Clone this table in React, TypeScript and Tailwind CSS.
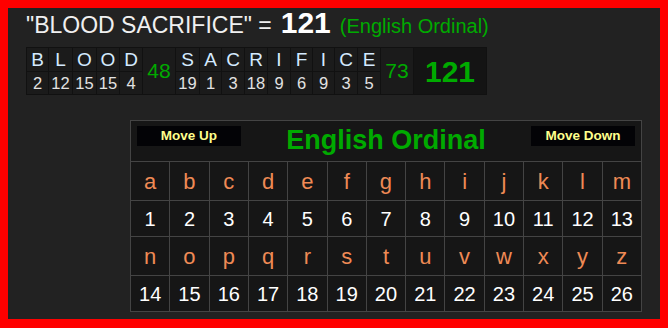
import React from "react";

const word1 = [
  ["B", 2, 21],
  ["L", 12, 23],
  ["O", 15, 23],
  ["O", 15, 22],
  ["D", 4, 22],
] as const;
const word2 = [
  ["S", 19, 23],
  ["A", 1, 21],
  ["C", 3, 22],
  ["R", 18, 22],
  ["I", 9, 22],
  ["F", 6, 21],
  ["I", 9, 21],
  ["C", 3, 22],
  ["E", 5, 22],
] as const;

const letters1 = "abcdefghijklm".split("");
const letters2 = "nopqrstuvwxyz".split("");

function LetterCol({ l, n, w }: { l: string; n: number; w: number }) {
  return (
    <div className="flex flex-col gap-px" style={{ width: w }}>
      <div className="h-[23px] bg-[#1b1b1b] flex items-center justify-center text-[19px] leading-none text-[#d4eaff]">
        {l}
      </div>
      <div className="h-[22px] bg-[#1b1b1b] flex items-center justify-center text-[16.5px] leading-none text-[#e2e2e2]">
        {n}
      </div>
    </div>
  );
}

export default function App() {
  return (
    <div
      className="w-[668px] h-[328px] border-t-8 border-l-8 border-r-8 border-b-[9px] border-[#ff0000] bg-[#222222] overflow-hidden"
      style={{ fontFamily: '"Liberation Sans", Arial, sans-serif' }}
    >
      <div className="pl-[18px] flex items-baseline h-[30px] whitespace-nowrap">
        <span className="text-[23px] leading-[30px] text-[#f0f0f0]">"BLOOD SACRIFICE" = </span>
        <span className="text-[30px] leading-[30px] font-bold text-white ml-[9px]">121</span>
        <span className="text-[20px] leading-[30px] text-[#00aa00] ml-[9px]">(English Ordinal)</span>
      </div>

      <div className="ml-[18px] mt-[9px] flex w-fit bg-[#111111] gap-px p-px">
        {word1.map(([l, n, w], i) => (
          <LetterCol key={"a" + i} l={l} n={n} w={w} />
        ))}
        <div className="w-[32px] bg-[#1b1b1b] flex items-center justify-center text-[21px] text-[#00aa00]">
          48
        </div>
        {word2.map(([l, n, w], i) => (
          <LetterCol key={"b" + i} l={l} n={n} w={w} />
        ))}
        <div className="w-[32px] bg-[#1b1b1b] flex items-center justify-center text-[21px] text-[#00aa00]">
          73
        </div>
        <div className="w-[72px] bg-[#141414] flex items-center justify-center text-[30px] font-bold text-[#00aa00]">
          121
        </div>
      </div>

      <div className="ml-[122px] mt-[25px] w-[512px] bg-[#444444] p-px flex flex-col gap-px">
        <div className="h-[40px] bg-[#161616] flex items-start justify-between px-[6px]">
          <div className="mt-[5px] w-[104px] h-[20px] bg-[#030306] flex items-center justify-center text-[13.5px] font-bold text-[#ffff8c]">
            Move Up
          </div>
          <div className="h-[40px] leading-[38px] text-[27px] font-bold text-[#00aa00]">
            English Ordinal
          </div>
          <div className="mt-[5px] w-[104px] h-[20px] bg-[#030306] flex items-center justify-center text-[13.5px] font-bold text-[#ffff8c]">
            Move Down
          </div>
        </div>
        {[letters1, letters2].map((row, r) => (
          <React.Fragment key={r}>
            <div className="grid grid-cols-[repeat(13,minmax(0,1fr))] gap-px">
              {row.map((c) => (
                <div
                  key={c}
                  className="h-[38px] bg-[#161616] flex items-center justify-center text-[22px] text-[#ef8a55]"
                >
                  {c}
                </div>
              ))}
            </div>
            <div className="grid grid-cols-[repeat(13,minmax(0,1fr))] gap-px">
              {row.map((c, i) => (
                <div
                  key={c}
                  className="h-[35px] bg-[#161616] flex items-center justify-center text-[20px] text-white"
                >
                  {r * 13 + i + 1}
                </div>
              ))}
            </div>
          </React.Fragment>
        ))}
      </div>
    </div>
  );
}
